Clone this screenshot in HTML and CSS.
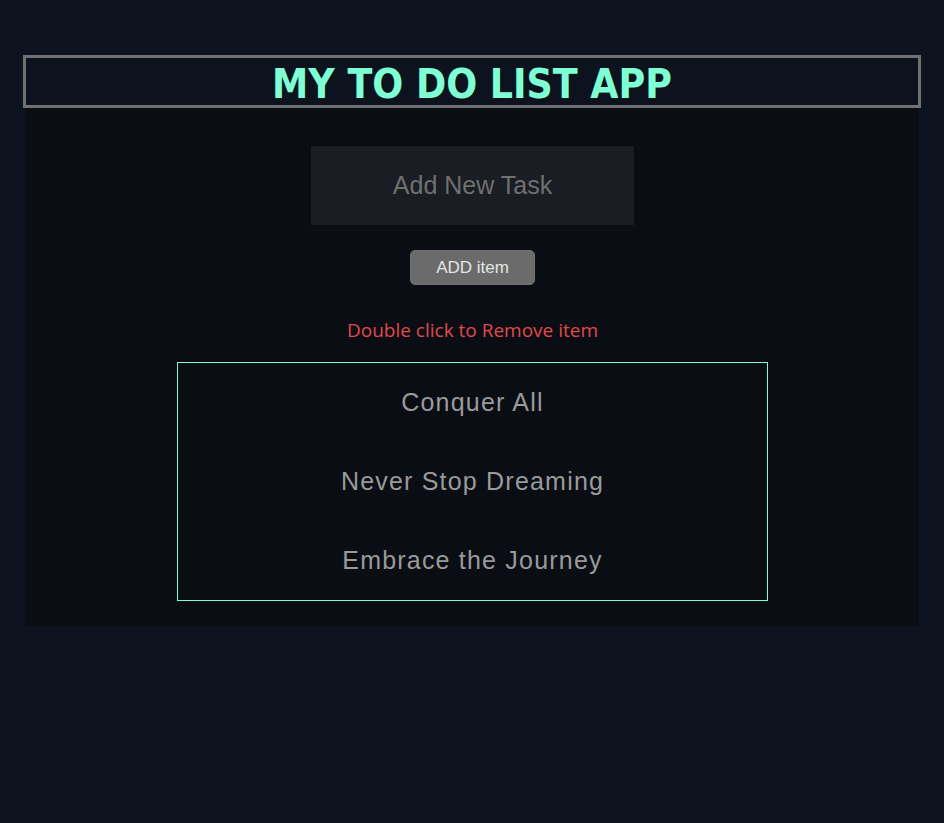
FILE: index.html
```html
<!DOCTYPE html>
<html lang="en">
<head>
<meta charset="utf-8">
<title>My To Do List App</title>
<link rel="stylesheet" href="styles.css">
</head>
<body>
<div class="app">
  <h1 class="title">MY TO DO LIST APP</h1>
  <div class="panel">
    <input class="task-input" type="text" placeholder="Add New Task">
    <button class="add-btn" type="button">ADD item</button>
    <p class="hint">Double click to Remove item</p>
    <ul class="list">
      <li class="item">Conquer All</li>
      <li class="item">Never Stop Dreaming</li>
      <li class="item">Embrace the Journey</li>
    </ul>
  </div>
</div>
</body>
</html>
```
FILE: styles.css
```css
html, body {
  margin: 0;
  padding: 0;
  background: #0d131e;
}
body {
  font-family: "Liberation Sans", Arial, sans-serif;
}
.app {
  padding: 55px 25px 0 26px;
}
.title {
  margin: 0 -2px 0 -3px;
  border: 3px solid #707070;
  height: 41px;
  padding-top: 6px;
  display: flex;
  align-items: center;
  justify-content: center;
  font-family: "DejaVu Sans Condensed", "DejaVu Sans", sans-serif;
  font-weight: bold;
  font-size: 40.5px;
  line-height: 41px;
  color: #7fffd4;
}
.panel {
  background: #0a0d14;
  display: flex;
  flex-direction: column;
  align-items: center;
  padding: 38px 0 25px;
}
.task-input {
  width: 323px;
  height: 79px;
  box-sizing: border-box;
  border: none;
  outline: none;
  background: #1a1d24;
  color: #ccc;
  text-align: center;
  font-family: "Liberation Sans", Arial, sans-serif;
  font-size: 25px;
}
.task-input::placeholder {
  color: #707070;
}
.add-btn {
  margin-top: 25px;
  width: 125px;
  height: 35px;
  box-sizing: border-box;
  background: #6b6b6b;
  border: 1px solid #6f6f6f;
  border-radius: 5px;
  color: #e4e4e4;
  font-family: "Liberation Sans", Arial, sans-serif;
  font-size: 17px;
}
.hint {
  margin: 32px 0 0;
  color: #e04a4a;
  font-family: "Open Sans", sans-serif;
  font-size: 19px;
  line-height: 26px;
}
.list {
  list-style: none;
  margin: 19px 0 0;
  padding: 0;
  width: 591px;
  height: 239px;
  box-sizing: border-box;
  border: 1px solid #7fffd4;
}
.item {
  height: 79px;
  display: flex;
  align-items: center;
  justify-content: center;
  color: #9a9a9a;
  font-size: 25px;
  letter-spacing: 1.2px;
}
```
